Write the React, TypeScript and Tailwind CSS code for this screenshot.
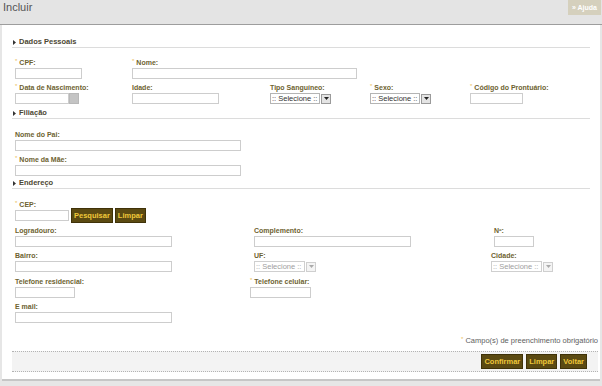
import type { ReactNode } from "react";

const Req = () => (
  <span className="text-[#ebbd5a] font-normal text-[6px] leading-[6px] align-top mr-[2px]">*</span>
);

function Label({ children, req = false, h = "h-[10px]" }: { children: ReactNode; req?: boolean; h?: string }) {
  return (
    <div className={`${h} leading-[9px] text-[7px] font-bold text-[#6d6230] whitespace-nowrap`}>
      {req && <Req />}
      {children}
    </div>
  );
}

function Input({ w }: { w: string }) {
  return <input className={`${w} h-[11px] block border border-[#cdcdcd] bg-white`} />;
}

function Select({ w, disabled = false }: { w: string; disabled?: boolean }) {
  return (
    <div className="flex items-center h-[11px]">
      <div
        className={`${w} h-[11px] border pl-[1px] bg-white text-[7.5px] leading-[9px] whitespace-nowrap overflow-hidden ${
          disabled ? "text-[#a0a0a0] border-[#cfcfcf]" : "text-[#333333] border-[#b4b4b4]"
        }`}
      >
        :: Selecione ::
      </div>
      <div
        className={`ml-[1px] w-[10px] h-[10px] border flex items-center justify-center ${
          disabled ? "border-[#cfcfcf] bg-[#f4f4f4]" : "border-[#9a9a9a] bg-[#e4e4e4]"
        }`}
      >
        <svg width="5" height="3" viewBox="0 0 5 3">
          <path d="M0 0h5L2.5 3z" fill={disabled ? "#aaa" : "#222"} />
        </svg>
      </div>
    </div>
  );
}

function Heading({ children, mt }: { children: ReactNode; mt: string }) {
  return (
    <div className={`${mt} mx-[10px] border-b border-[#dcdcdc] flex items-center h-[11px]`}>
      <svg width="3" height="5" viewBox="0 0 3 5" className="ml-[1px] mr-[3px]">
        <path d="M0 0l3 2.5L0 5z" fill="#333" />
      </svg>
      <span className="text-[7.5px] leading-[10px] font-bold text-[#4c4732]">{children}</span>
    </div>
  );
}

function Btn({ children }: { children: ReactNode }) {
  return (
    <button className="h-[15px] px-[2px] bg-[#5b4a12] border border-[#3f3209] text-[#efc83a] text-[7.5px] leading-[13px] font-bold">
      {children}
    </button>
  );
}

export default function App() {
  return (
    <div className="w-[602px] h-[386px] overflow-hidden bg-[#e6e6e6] font-['Liberation_Sans',Arial,sans-serif]">
      {/* header */}
      <div className="h-[25px] flex justify-between items-start bg-[#e4e4e4] border-b border-[#9d9d9d]">
        <h1 className="pl-[3px] pt-[1px] text-[11px] leading-[13px] text-[#555555]">Incluir</h1>
        <button className="mr-[1px] h-[15px] px-[4px] bg-[#d5d0bd] text-white text-[7px] font-bold leading-[15px]">
          » Ajuda
        </button>
      </div>

      {/* panel */}
      <div className="mx-[2px] h-[356px] bg-white border-b-2 border-[#c6c6c6] flex flex-col">
        <Heading mt="mt-[12px]">Dados Pessoais</Heading>
        <div className="mt-[10px] pl-[13px] flex flex-col gap-[4px]">
          <div className="flex">
            <div className="w-[117px]">
              <Label req>CPF:</Label>
              <Input w="w-[67px]" />
            </div>
            <div>
              <Label req>Nome:</Label>
              <Input w="w-[225px]" />
            </div>
          </div>
          <div className="flex">
            <div className="w-[117px]">
              <Label req>Data de Nascimento:</Label>
              <div className="flex">
                <Input w="w-[54px]" />
                <div className="w-[10px] h-[11px] bg-[#c4c4c4] border border-[#b8b8b8]" />
              </div>
            </div>
            <div className="w-[138px]">
              <Label>Idade:</Label>
              <Input w="w-[87px]" />
            </div>
            <div className="w-[100px]">
              <Label>Tipo Sanguíneo:</Label>
              <Select w="w-[50px]" />
            </div>
            <div className="w-[100px]">
              <Label req>Sexo:</Label>
              <Select w="w-[50px]" />
            </div>
            <div>
              <Label req>Código do Prontuário:</Label>
              <Input w="w-[53px]" />
            </div>
          </div>
        </div>

        <Heading mt="mt-[4px]">Filiação</Heading>
        <div className="mt-[11px] pl-[13px] flex flex-col gap-[4px]">
          <div>
            <Label>Nome do Pai:</Label>
            <Input w="w-[226px]" />
          </div>
          <div>
            <Label req>Nome da Mãe:</Label>
            <Input w="w-[226px]" />
          </div>
        </div>

        <Heading mt="mt-[2px]">Endereço</Heading>
        <div className="mt-[11px] pl-[13px] flex flex-col gap-[4px]">
          <div>
            <Label req h="h-[8px]">CEP:</Label>
            <div className="flex items-center gap-[2px] h-[14px]">
              <Input w="w-[54px]" />
              <Btn>Pesquisar</Btn>
              <Btn>Limpar</Btn>
            </div>
          </div>
          <div className="flex">
            <div className="w-[239px]">
              <Label>Logradouro:</Label>
              <Input w="w-[157px]" />
            </div>
            <div className="w-[240px]">
              <Label>Complemento:</Label>
              <Input w="w-[157px]" />
            </div>
            <div>
              <Label>Nº:</Label>
              <Input w="w-[40px]" />
            </div>
          </div>
          <div className="flex">
            <div className="w-[239px]">
              <Label>Bairro:</Label>
              <Input w="w-[157px]" />
            </div>
            <div className="w-[237px]">
              <Label>UF:</Label>
              <Select w="w-[51px]" disabled />
            </div>
            <div>
              <Label>Cidade:</Label>
              <Select w="w-[51px]" disabled />
            </div>
          </div>
          <div className="flex mt-[1px]">
            <div className="w-[235px]">
              <Label>Telefone residencial:</Label>
              <Input w="w-[60px]" />
            </div>
            <div>
              <Label req>Telefone celular:</Label>
              <Input w="w-[61px]" />
            </div>
          </div>
          <div>
            <Label>E mail:</Label>
            <Input w="w-[157px]" />
          </div>
        </div>

        <p className="mt-[13px] pr-[2px] text-right text-[7.5px] leading-[10px] text-[#5e5e5e]">
          <Req />
          Campo(s) de preenchimento obrigatório
        </p>
        <div className="mt-[5px] ml-[10px] mr-[2px] h-[21px] bg-[#f3f3f3] border-y border-dotted border-[#b3b3b3] flex items-center justify-end gap-[3px] pr-[11px]">
          <Btn>Confirmar</Btn>
          <Btn>Limpar</Btn>
          <Btn>Voltar</Btn>
        </div>
      </div>
    </div>
  );
}
